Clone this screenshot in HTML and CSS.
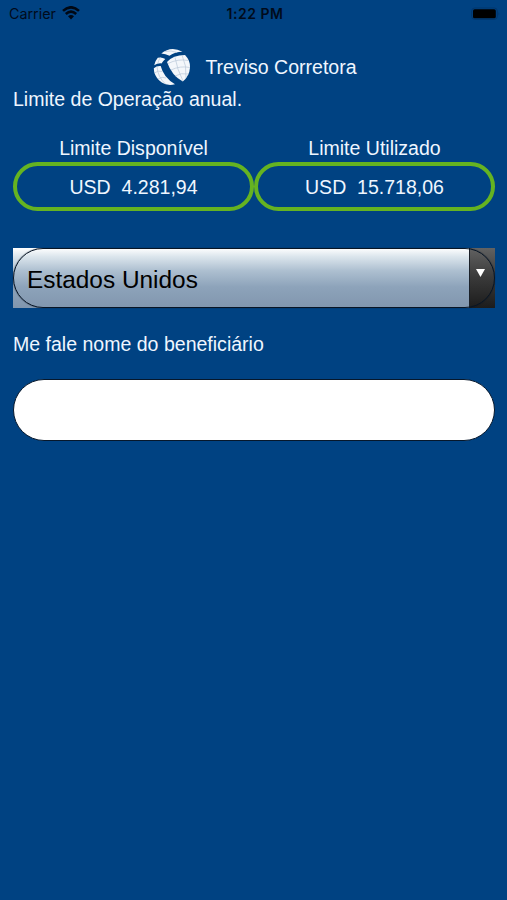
FILE: index.html
```html
<!DOCTYPE html>
<html lang="pt-BR">
<head>
<meta charset="utf-8">
<meta name="viewport" content="width=device-width, initial-scale=1">
<title>Treviso Corretora</title>
<link rel="stylesheet" href="styles.css">
</head>
<body>
<div class="status">
  <div class="carrier"><span>Carrier</span>
    <svg class="wifi" width="18" height="14" viewBox="0 0 18 14" aria-hidden="true">
      <path d="M1 4.9Q9 -2.3 17 4.9M3.8 8Q9 3.4 14.2 8" fill="none" stroke="#000814" stroke-width="2.6"/>
      <path d="M6 10.3Q9 7.7 12 10.3L9 13.5Z" fill="#000814"/>
    </svg>
  </div>
  <div class="time">1:22 PM</div>
  <svg class="battery" width="30" height="14" viewBox="0 0 30 14" aria-hidden="true">
    <rect x=".7" y="1" width="25.6" height="11.4" rx="3" fill="none" stroke="#00366d"/>
    <rect x="2" y="2.3" width="22.8" height="9" rx="1.6" fill="#000"/>
    <path d="M27.5 5Q29.2 6.7 27.5 8.6Z" fill="#00366d"/>
  </svg>
</div>
<main>
  <header class="brand">
    <svg class="logo" width="38" height="38" viewBox="0 0 38 38" aria-hidden="true">
      <g fill="#f4f7fb">
        <path d="M8.3 5.6Q18 -2.6 29.5 3.8Q22 4 16.5 7.8Q12.5 5.8 8.3 5.6Z"/>
        <path d="M4.8 9.8Q8.8 8.8 12.3 11Q10 13 8.5 15.4Q4.5 15 1.2 17.2Q2 13 4.8 9.8Z"/>
        <path d="M14 14Q20 7 32 7Q37.4 12.5 37 19.5Q36.4 28 29.8 33.5Q18.8 27.8 14 14Z"/>
        <path d="M.8 20.2Q4 17.6 7.7 18Q10.5 29.5 22 36.2Q13 38.6 6.3 32.5Q.8 27 .8 20.2Z"/>
      </g>
      <path d="M15 15.5Q25 10.5 35.5 12.5M18 22Q27 17.5 37 19.5M22 28Q28 24.5 35.5 26M22 9.5Q24 21 30 33M29 7Q34 18 33 30M1.5 25Q5 22 9 23.5M5 31Q9 28 13 30M4 18.5Q4.5 29 13 36.5M7.5 9.5Q5.5 12 4.8 15.5M12 3.5Q18 2 24 4.5" fill="none" stroke="#b9c7d8" stroke-width=".7"/>
    </svg>
    <h1>Treviso Corretora</h1>
  </header>
  <p class="intro">Limite de Operação anual.</p>
  <section class="limits">
    <div class="limit"><span>Limite Disponível</span><div class="amount">USD&nbsp; 4.281,94</div></div>
    <div class="limit"><span>Limite Utilizado</span><div class="amount">USD&nbsp; 15.718,06</div></div>
  </section>
  <div class="select" role="button" tabindex="0">
    <span class="country">Estados Unidos</span>
    <span class="arrow"><svg width="9" height="8" viewBox="0 0 9 8" aria-hidden="true"><path d="M0 0H9L4.5 8Z" fill="#fff"/></svg></span>
  </div>
  <label for="beneficiary">Me fale nome do beneficiário</label>
  <input id="beneficiary" type="text">
</main>
</body>
</html>
```
FILE: styles.css
```css
* { box-sizing: border-box; }
body {
  margin: 0;
  min-height: 900px;
  background: #004282;
  color: #eff6ff;
  font: 19.55px/24px "Liberation Sans", Arial, sans-serif;
}
.status {
  height: 27px;
  padding: 0 6px 0 9px;
  display: grid;
  grid-template-columns: 1fr auto 1fr;
  align-items: center;
  color: #000b1b;
  font: 14.3px/27px Inter, sans-serif;
}
.carrier { display: flex; align-items: center; gap: 6px; }
.wifi { margin-top: -2px; }
.time { font-weight: 600; font-size: 14px; letter-spacing: .5px; }
.battery { justify-self: end; }
main { padding: 0 12px 0 13px; }
.brand {
  display: flex;
  justify-content: center;
  align-items: center;
  gap: 14px;
  height: 38px;
  margin-top: 21px;
  padding-left: 2px;
}
h1 { margin: 0; font-size: inherit; font-weight: 400; line-height: 24px; }
.intro { margin: 1px 0 0; }
.limits {
  display: grid;
  grid-template-columns: 1fr 1fr;
  margin-top: 25px;
  text-align: center;
}
.limit { display: flex; flex-direction: column; gap: 2px; }
.amount {
  height: 49px;
  border: 4px solid #65b321;
  border-radius: 25px;
  line-height: 42px;
}
.select {
  position: relative;
  display: flex;
  height: 60px;
  margin-top: 37px;
  background: linear-gradient(#fff 0, #dce6ed 14%, #adbfd0 38%, #8da3ba 65%, #8196ae 100%);
  color: #000;
}
.select::after {
  content: "";
  position: absolute;
  inset: 0;
  border: 1.5px solid #081525;
  border-radius: 31px;
  box-shadow: 0 0 1px #081525;
}
.country { flex: 1; padding-left: 14px; font-size: 24.4px; line-height: 63px; }
.arrow {
  width: 26px;
  padding: 21px 0 0 6px;
  background: linear-gradient(#626262, #3a3a3a 48%, #1c1c1c);
  border-left: 1px solid #1a2028;
  line-height: 0;
}
label { display: block; margin-top: 24px; }
input {
  display: block;
  width: 100%;
  height: 62px;
  margin-top: 23px;
  padding: 0 16px;
  border: 1.5px solid #06172b;
  border-radius: 31px;
  background: #fff;
  font: inherit;
  outline: 0;
}
```
